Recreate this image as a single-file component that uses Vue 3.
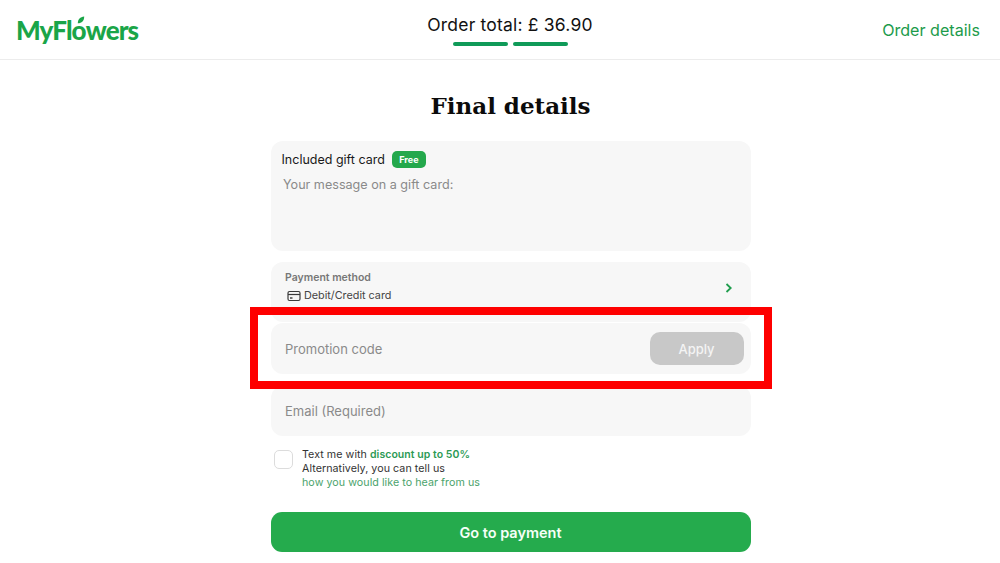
<script setup>
const steps = [1, 2]
</script>

<template>
  <div class="page">
    <header class="top">
      <div class="logo">
        <span>MyFl</span><span class="o">o<svg class="leaf" viewBox="0 0 10 10" width="8" height="8"><path d="M1 9C1 4 4 1 9 0.5 9 6 6 9 1 9Z" fill="#1aa548"/></svg></span><span>wers</span>
      </div>
      <div class="total">
        <div class="total-text">Order total: £ 36.90</div>
        <div class="steps">
          <i v-for="s in steps" :key="s"></i>
        </div>
      </div>
      <a class="details">Order details</a>
    </header>

    <main class="main">
      <h1>Final details</h1>

      <section class="card gift">
        <div class="gift-head">
          <span class="gift-title">Included gift card</span>
          <span class="free">Free</span>
        </div>
        <div class="placeholder gift-msg">Your message on a gift card:</div>
      </section>

      <section class="card pay">
        <div>
          <div class="pay-label">Payment method</div>
          <div class="pay-value">
            <svg width="14" height="12" viewBox="0 0 14 12" fill="none" stroke="#3a3a3a" stroke-width="1.2">
              <rect x="1" y="1.5" width="12" height="9" rx="1.5"/>
              <path d="M1 4.5H13"/>
              <path d="M3 8H5.5" stroke-width="1.4"/>
            </svg>
            <span>Debit/Credit card</span>
          </div>
        </div>
        <svg class="chev" width="8" height="12" viewBox="0 0 8 12" fill="none" stroke="#1f9d4d" stroke-width="1.8">
          <path d="M1.5 2L5.7 6 1.5 10"/>
        </svg>
      </section>

      <section class="card promo">
        <span class="placeholder">Promotion code</span>
        <button class="apply">Apply</button>
        <div class="redbox"></div>
      </section>

      <section class="card email">
        <span class="placeholder">Email (Required)</span>
      </section>

      <section class="consent">
        <span class="check"></span>
        <div class="consent-text">
          <div>Text me with <b>discount up to 50%</b></div>
          <div>Alternatively, you can tell us</div>
          <div class="link">how you would like to hear from us</div>
        </div>
      </section>

      <button class="go">Go to payment</button>
    </main>
  </div>
</template>

<style>
html, body { margin: 0; background: #fff; }
</style>

<style scoped>
.page {
  width: 1000px;
  height: 563px;
  overflow: hidden;
  background: #fff;
  font-family: Inter, "Liberation Sans", sans-serif;
  color: #111;
}
.top {
  height: 59px;
  border-bottom: 1px solid #ececec;
  display: grid;
  grid-template-columns: 1fr auto 1fr;
  align-items: center;
  padding: 0 20px 0 16px;
}
.logo {
  font-family: Lato, sans-serif;
  font-weight: 900;
  font-size: 26px;
  letter-spacing: -0.9px;
  color: #1aa548;
  display: flex;
  align-items: baseline;
}
.o { position: relative; }
.leaf { position: absolute; left: 5px; top: 2px; }
.total {
  margin-left: 24px;
  display: flex;
  flex-direction: column;
  align-items: center;
  gap: 6px;
}
.total-text {
  font-size: 17.5px;
  line-height: 22px;
  letter-spacing: 0.2px;
  color: #111;
}
.steps { display: flex; gap: 5px; }
.steps i {
  display: block;
  width: 55px;
  height: 4px;
  border-radius: 2px;
  background: #0f9a58;
}
.details {
  justify-self: end;
  font-size: 16.1px;
  color: #1c9b4b;
}
.main {
  width: 480px;
  margin-left: 270.5px;
  display: flex;
  flex-direction: column;
}
h1 {
  margin: 30px 0 19px;
  font-family: "DejaVu Serif", "Liberation Serif", serif;
  font-size: 23px;
  line-height: 32px;
  font-weight: 700;
  text-align: center;
  color: #0b0b0b;
}
.card {
  background: #f7f7f7;
  border-radius: 12px;
  box-sizing: border-box;
}
.gift {
  height: 110px;
  padding: 9px 11px;
  margin-bottom: 11px;
}
.gift-head { display: flex; align-items: center; gap: 7px; height: 18px; }
.gift-title { font-size: 12.5px; color: #1a1a1a; }
.free {
  background: #24a84c;
  color: #fff;
  font-size: 9px;
  font-weight: 700;
  line-height: 17px;
  height: 17px;
  width: 34px;
  text-align: center;
  border-radius: 5px;
}
.placeholder { font-size: 13px; color: #8a8a8a; }
.gift-msg { margin: 9px 0 0 1.5px; font-size: 12.6px; }
.pay {
  height: 60px;
  padding: 9px 18px 0 14.5px;
  margin-bottom: 1px;
  display: flex;
  justify-content: space-between;
  align-items: flex-start;
}
.pay-label { font-size: 10.5px; line-height: 13px; font-weight: 600; color: #777; }
.pay-value {
  margin-top: 5px;
  margin-left: 2px;
  display: flex;
  align-items: center;
  gap: 3px;
  font-size: 10.8px;
  line-height: 14px;
  color: #444;
}
.chev { margin-top: 11px; }
.promo {
  position: relative;
  height: 51px;
  padding: 0 7px 0 14.5px;
  margin-bottom: 12px;
  display: flex;
  justify-content: space-between;
  align-items: center;
}
.apply {
  width: 94px;
  height: 33px;
  border: 0;
  border-radius: 10px;
  background: #c8c8c8;
  color: #f4f4f4;
  font: 500 13px Inter, sans-serif;
}
.redbox {
  position: absolute;
  left: -20.5px;
  top: -16px;
  width: 522px;
  height: 82px;
  box-sizing: border-box;
  border: 8px solid #fe0000;
  pointer-events: none;
}
.email {
  height: 50px;
  padding: 0 14.5px;
  display: flex;
  align-items: center;
}
.consent {
  display: flex;
  gap: 9px;
  margin: 11px 0 0 3.5px;
  height: 48px;
  padding-top: 1px;
}
.check {
  width: 17px;
  height: 17px;
  border: 1px solid #dcdcdc;
  border-radius: 5px;
  margin-top: 2px;
  background: #fff;
}
.consent-text { font-size: 10.7px; line-height: 14px; color: #333; letter-spacing: 0.05px; }
.consent-text b { font-weight: 600; font-size: 10.5px; color: #2c9a55; }
.link { color: #4ba36c; }
.go {
  margin-top: 16px;
  height: 40px;
  border: 0;
  border-radius: 11px;
  background: #25ab4d;
  color: #f5fff7;
  font: 600 14.5px Inter, sans-serif;
}
</style>
